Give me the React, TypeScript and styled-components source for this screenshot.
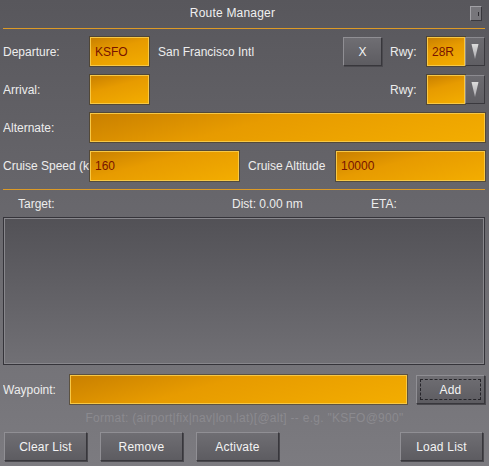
import styled, {createGlobalStyle} from "styled-components";

const GlobalStyle = createGlobalStyle`
    html, body {
        margin: 0;
        padding: 0;
        background: #6a696e;
    }
`

const Window = styled.div`
    width: 489px;
    height: 466px;
    box-sizing: border-box;
    display: flex;
    flex-direction: column;
    overflow: hidden;
    background: linear-gradient(#58575c, #7c7b80);
    color: #ededed;
    font: 12px "Liberation Sans", Arial, sans-serif;
`

const TitleBar = styled.div`
    height: 26px;
    display: flex;
    align-items: center;
    padding-right: 7px;
`

const Title = styled.div`
    flex: 1;
    text-align: center;
    padding-right: 5px;
    letter-spacing: 0.2px;
    color: #f0f0f0;
`

const CloseButton = styled.div`
    box-sizing: border-box;
    width: 12px;
    height: 15px;
    margin-top: 1px;
    background: #77767b;
    border: 1px solid;
    border-color: #a2a1a6 #3a393e #3a393e #a2a1a6;
    position: relative;

    &::after {
        content: '';
        position: absolute;
        right: 2px;
        top: 5px;
        width: 1px;
        height: 4px;
        background: #2f2e33;
    }
`

const Rule = styled.div<{ $top?: number }>`
    height: 1px;
    margin: ${p => p.$top ?? 0}px 4px 0 3px;
    background: #dc9a26;
    flex: none;
`

const Form = styled.div`
    display: flex;
    flex-direction: column;
    gap: 9px;
    padding: 0 4px 0 3px;
    margin-top: 8px;
`

const Row = styled.div<{ $h?: number }>`
    display: flex;
    align-items: center;
    height: ${p => p.$h ?? 29}px;
    flex: none;
`

const Label = styled.div<{ $w: number; $ml?: number }>`
    width: ${p => p.$w}px;
    margin-left: ${p => p.$ml ?? 0}px;
    flex: none;
    white-space: nowrap;
    overflow: hidden;
`

const Text = styled.div`
    flex: 1;
    margin-left: 9px;
    white-space: nowrap;
`

const Field = styled.div<{ $w?: number }>`
    box-sizing: border-box;
    height: 100%;
    width: ${p => (p.$w ? `${p.$w}px` : 'auto')};
    flex: ${p => (p.$w ? 'none' : '1')};
    display: flex;
    align-items: center;
    padding-left: 4px;
    background: linear-gradient(165deg, #c98000 0%, #e79b00 40%, #f3ad00 100%);
    border: 1px solid #f7c846;
    box-shadow: 0 0 0 1px rgba(70, 52, 20, 0.55);
    color: #781300;
`

const Button = styled.div<{ $w?: number; $focus?: boolean }>`
    box-sizing: border-box;
    height: 29px;
    width: ${p => p.$w ?? 83}px;
    flex: none;
    display: flex;
    align-items: center;
    justify-content: center;
    background: linear-gradient(#6f6e73, #5d5c61);
    border: 1px solid;
    border-color: #908f94 #38373c #38373c #908f94;
    box-shadow: 1px 1px 0 #4a494e;
    color: #f4f4f4;
    letter-spacing: 0.2px;
    outline: ${p => (p.$focus ? '1px dashed #26252a' : 'none')};
    outline-offset: -5px;
`

const ArrowButton = styled.div`
    box-sizing: border-box;
    width: 20px;
    height: 100%;
    flex: none;
    display: flex;
    align-items: center;
    justify-content: center;
    background: linear-gradient(#6c6b70, #5f5e63);
    border: 1px solid;
    border-color: #8c8b90 #3a393e #3a393e #8c8b90;
`

const Spacer = styled.div<{ $w?: number }>`
    flex: ${p => (p.$w ? 'none' : '1')};
    width: ${p => (p.$w ? `${p.$w}px` : 'auto')};
`

const Header = styled.div`
    display: grid;
    grid-template-columns: 214px 139px 1fr;
    align-items: center;
    height: 27px;
    padding-left: 18px;
    flex: none;
`

const ListBox = styled.div`
    box-sizing: border-box;
    height: 148px;
    margin: 0 4px 0 3px;
    flex: none;
    background: linear-gradient(#525156, #717075);
    border: 1px solid #35343a;
    box-shadow: inset 0 0 0 1px #88878c;
`

const WaypointRow = styled(Row)`
    margin-top: 10px;
    padding: 0 4px 0 3px;
`

const Hint = styled.div`
    height: 28px;
    display: flex;
    align-items: center;
    justify-content: center;
    letter-spacing: 0.27px;
    color: #8b8a8f;
    flex: none;
`

const ButtonBar = styled.div`
    display: flex;
    gap: 13px;
    padding: 0 6px 0 4px;
    flex: none;
`

const DropArrow = () => (
  <svg width="10" height="17" viewBox="0 0 10 17">
    <defs>
      <linearGradient id="arrowFill" x1="0" y1="0" x2="0" y2="1">
        <stop offset="0" stopColor="#dcdcdc"/>
        <stop offset="1" stopColor="#a9a8ad"/>
      </linearGradient>
    </defs>
    <polygon points="1.5,1 8.5,1 5,16" fill="url(#arrowFill)"/>
  </svg>
)

const RouteManager = () => {
  return (
    <Window>
      <TitleBar>
        <Title>Route Manager</Title>
        <CloseButton/>
      </TitleBar>
      <Rule $top={2}/>

      <Form>
        <Row>
          <Label $w={87}>Departure:</Label>
          <Field $w={59}>KSFO</Field>
          <Text>San Francisco Intl</Text>
          <Button $w={39}>X</Button>
          <Label $w={37} $ml={8}>Rwy:</Label>
          <Field $w={38}>28R</Field>
          <ArrowButton><DropArrow/></ArrowButton>
        </Row>
        <Row>
          <Label $w={87}>Arrival:</Label>
          <Field $w={59}/>
          <Spacer/>
          <Label $w={37}>Rwy:</Label>
          <Field $w={38}/>
          <ArrowButton><DropArrow/></ArrowButton>
        </Row>
        <Row>
          <Label $w={87}>Alternate:</Label>
          <Field/>
        </Row>
        <Row $h={30}>
          <Label $w={87}>Cruise Speed (k</Label>
          <Field $w={149}>160</Field>
          <Label $w={88} $ml={9}>Cruise Altitude</Label>
          <Field>10000</Field>
        </Row>
      </Form>

      <Rule $top={8}/>
      <Header>
        <span>Target:</span>
        <span>Dist: 0.00 nm</span>
        <span>ETA:</span>
      </Header>
      <ListBox/>

      <WaypointRow>
        <Label $w={67}>Waypoint:</Label>
        <Field/>
        <Spacer $w={9}/>
        <Button $w={69} $focus>Add</Button>
      </WaypointRow>
      <Hint>Format: (airport|fix|nav|lon,lat)[@alt] -- e.g. "KSFO@900"</Hint>

      <ButtonBar>
        <Button>Clear List</Button>
        <Button>Remove</Button>
        <Button>Activate</Button>
        <Spacer/>
        <Button>Load List</Button>
      </ButtonBar>
    </Window>
  )
}

const App = () => (
  <>
    <GlobalStyle/>
    <RouteManager/>
  </>
)

export default App;
